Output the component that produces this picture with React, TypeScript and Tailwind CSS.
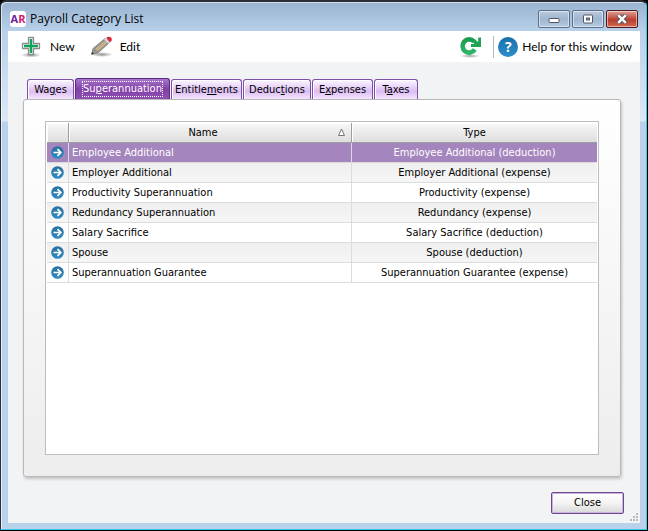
import { useState } from 'react'

type Category = { name: string, type: string }

const TABS = [
  { id: 'wages', before: 'Wa', key: 'g', after: 'es', width: 'w-[47px]' },
  { id: 'super', before: 'Su', key: 'p', after: 'erannuation', width: 'w-[95px]' },
  { id: 'entitlements', before: 'Entitle', key: 'm', after: 'ents', width: 'w-[71px]' },
  { id: 'deductions', before: 'Deduc', key: 't', after: 'ions', width: 'w-[68px]' },
  { id: 'expenses', before: 'E', key: 'x', after: 'penses', width: 'w-[61px]' },
  { id: 'taxes', before: 'T', key: 'a', after: 'xes', width: 'w-11' },
]

const CATEGORIES: Category[] = [
  { name: 'Employee Additional', type: 'Employee Additional (deduction)' },
  { name: 'Employer Additional', type: 'Employer Additional (expense)' },
  { name: 'Productivity Superannuation', type: 'Productivity (expense)' },
  { name: 'Redundancy Superannuation', type: 'Redundancy (expense)' },
  { name: 'Salary Sacrifice', type: 'Salary Sacrifice (deduction)' },
  { name: 'Spouse', type: 'Spouse (deduction)' },
  { name: 'Superannuation Guarantee', type: 'Superannuation Guarantee (expense)' },
]

function AppLogo() {
  return (
    <span className="flex h-4 w-4 items-center justify-center rounded-[3px] bg-white font-['Open_Sans',sans-serif] text-[11px] leading-4 font-bold">
      <span className="text-[#6b1fa0]">A</span>
      <span className="text-[#d6186f]">R</span>
    </span>
  )
}

function NewIcon() {
  return (
    <svg width="22" height="22" viewBox="0 0 22 22" aria-hidden="true">
      <defs>
        <radialGradient id="new-shadow">
          <stop offset="0" stopColor="#777" stopOpacity="0.8" />
          <stop offset="1" stopColor="#777" stopOpacity="0" />
        </radialGradient>
      </defs>
      <ellipse cx="10" cy="19" rx="10" ry="2.500" fill="url(#new-shadow)" />
      <path d="M7.500 1.500h5v6h6v5h-6v6h-5v-6h-6v-5h6z" fill="#fff" stroke="#8c8c8c" strokeWidth="1.300" strokeLinejoin="round" />
      <path d="M10 3v14M3 10h14" stroke="#10a45a" strokeWidth="2.600" />
    </svg>
  )
}

function EditIcon() {
  return (
    <svg width="22" height="22" viewBox="0 0 22 22" aria-hidden="true">
      <defs>
        <radialGradient id="edit-shadow">
          <stop offset="0" stopColor="#777" stopOpacity="0.8" />
          <stop offset="1" stopColor="#777" stopOpacity="0" />
        </radialGradient>
      </defs>
      <ellipse cx="11" cy="18.500" rx="11" ry="2.500" fill="url(#edit-shadow)" />
      <path d="M.5 18.500l1.500-6L14 2.500l4.500 4L7 17z" fill="#98948f" stroke="#827e79" strokeWidth="0.800" />
      <path d="M4.500 13L14.300 4.800l1.900 1.800L6.500 15z" fill="#dcc096" />
      <path d="M5.500 14L15.300 5.700" stroke="#9c876a" strokeWidth="0.700" />
      <path d="M13.800 2.800l4.400 4.200" stroke="#d5d9dc" strokeWidth="2" />
      <path d="M15.200 2Q17.200 0 19.300 1t1.200 4L18.800 6.300z" fill="#d8263c" />
      <path d="M.5 18.500l.7-2.400 1.800 1.500z" fill="#333" />
    </svg>
  )
}

function RefreshIcon() {
  return (
    <svg width="24" height="22" viewBox="0 0 24 22" aria-hidden="true">
      <defs>
        <radialGradient id="refresh-shadow">
          <stop offset="0" stopColor="#777" stopOpacity="0.7" />
          <stop offset="1" stopColor="#777" stopOpacity="0" />
        </radialGradient>
        <linearGradient id="refresh-green" x1="0" y1="0" x2="0" y2="1">
          <stop offset="0" stopColor="#1b9c50" />
          <stop offset="1" stopColor="#2bb565" />
        </linearGradient>
      </defs>
      <ellipse cx="11" cy="20" rx="10" ry="2" fill="url(#refresh-shadow)" />
      <path d="M15.800 13.500A6.600 6.600 0 1 1 15 5.500" fill="none" stroke="url(#refresh-green)" strokeWidth="4.600" />
      <path d="M19.200 1.500H22V11H12V8h3.500L13.500 6l2.500-2.500 3.200 2.500z" fill="#1fa355" />
    </svg>
  )
}

function HelpIcon() {
  return (
    <span className="flex h-5 w-5 items-center justify-center rounded-full bg-linear-to-b from-[#1a6fa8] to-[#2b8fce] font-['Open_Sans',sans-serif] text-sm leading-5 font-bold text-white">
      ?
    </span>
  )
}

function ArrowIcon() {
  return (
    <svg width="13" height="13" viewBox="0 0 13 13" aria-hidden="true">
      <defs>
        <linearGradient id="arrow-blue" x1="0" y1="0" x2="0" y2="1">
          <stop offset="0" stopColor="#2a6f9f" />
          <stop offset="1" stopColor="#2f8cc4" />
        </linearGradient>
      </defs>
      <circle cx="6.500" cy="6.500" r="6.300" fill="url(#arrow-blue)" />
      <path d="M2.500 6.500h7M6.500 3.200l3.300 3.300-3.300 3.300" fill="none" stroke="#fff" strokeWidth="1.700" />
    </svg>
  )
}

function TitleBar() {
  const control = 'flex h-[18px] w-8 items-center justify-center rounded-[2px] border shadow-[inset_0_0_0_1px_rgba(255,255,255,0.5)]'
  return (
    <header className="flex h-[29px] items-center gap-1 pt-[5px] pr-0.5 pl-0.5">
      <AppLogo />
      <h1 className="flex-1 font-['Open_Sans',sans-serif] text-[12px] leading-4 text-black">Payroll Category List</h1>
      <div className="flex gap-0.5">
        <button aria-label="Minimize" className={`${control} border-[#5c6f88] bg-linear-to-b from-[#bccbde] via-[#a0b5cf] via-50% to-[#b4c9e2]`}>
          <svg width="12" height="10" viewBox="0 0 12 10" aria-hidden="true">
            <rect x="1" y="4.500" width="10" height="4" rx="1" fill="#fff" stroke="#53565f" />
          </svg>
        </button>
        <button aria-label="Maximize" className={`${control} border-[#5c6f88] bg-linear-to-b from-[#bccbde] via-[#a0b5cf] via-50% to-[#b4c9e2]`}>
          <svg width="12" height="10" viewBox="0 0 12 10" aria-hidden="true">
            <rect x="1.500" y="1" width="9" height="8" rx="1" fill="#fff" stroke="#53565f" />
            <rect x="4.500" y="4" width="3" height="2" fill="#8ca5c4" stroke="#53565f" />
          </svg>
        </button>
        <button aria-label="Close window" className={`${control} border-[#4f1a1e] bg-linear-to-b from-[#dfa195] via-[#b93c2c] via-55% to-[#d06a50]`}>
          <svg width="14" height="10" viewBox="0 0 14 10" aria-hidden="true">
            <path d="M3 1l8 8M11 1L3 9" stroke="#53565f" strokeWidth="4.500" />
            <path d="M3.200 1.200l7.600 7.600M10.800 1.200L3.200 8.800" stroke="#fff" strokeWidth="2.400" />
          </svg>
        </button>
      </div>
    </header>
  )
}

function Toolbar() {
  return (
    <div className="flex h-[31px] items-center rounded-b-[3px] bg-white pr-2 pl-[13px] font-['Lato',sans-serif] text-[12px] leading-4 text-black">
      <button className="flex items-center gap-[7px]">
        <NewIcon />
        New
      </button>
      <button className="ml-4 flex items-center gap-[7px]">
        <EditIcon />
        Edit
      </button>
      <button aria-label="Refresh" className="mr-2.5 ml-auto">
        <RefreshIcon />
      </button>
      <a href="#help" className="flex h-[22px] items-center gap-1 border-l border-[#b9b9b9] pl-1">
        <HelpIcon />
        Help for this window
      </a>
    </div>
  )
}

function CategoryTable() {
  const [selected, setSelected] = useState(0)
  const head = 'h-5 border-b border-[#9d9d9d] bg-linear-to-b from-[#f8f8f8] to-[#dedede] p-0 font-normal shadow-[inset_1px_1px_0_#fff]'

  return (
    <table className="w-full table-fixed border-separate border-spacing-0 text-[11px] leading-4">
      <colgroup>
        <col className="w-[22px]" />
        <col className="w-[283px]" />
        <col />
      </colgroup>
      <thead>
        <tr>
          <th aria-label="Open" className={`${head} border-r`} />
          <th className={`${head} border-r`}>
            <div className="flex items-center pr-[5px]">
              <span className="flex-1">Name</span>
              <svg width="9" height="9" viewBox="0 0 9 9" aria-hidden="true">
                <path d="M4.500 1L7.500 7.500h-6z" fill="#fff" stroke="#777" />
              </svg>
            </div>
          </th>
          <th className={head}>Type</th>
        </tr>
      </thead>
      <tbody>
        {CATEGORIES.map((category, i) => {
          const rowStyle = i === selected
            ? 'bg-[#a585bd] text-white'
            : i % 2 === 1
              ? 'bg-linear-to-b from-[#efefef] to-[#f6f6f6] text-black'
              : 'bg-white text-black'
          return (
            <tr key={category.name} onClick={() => setSelected(i)} className={rowStyle}>
              <td className="h-5 border-r border-b border-[#dcdcdc] p-0">
                <button aria-label={`Open ${category.name}`} className="flex w-full justify-center">
                  <ArrowIcon />
                </button>
              </td>
              <td className="h-5 border-r border-b border-[#dcdcdc] p-0 pl-[3px]">{category.name}</td>
              <td className="h-5 border-b border-[#dcdcdc] p-0 text-center">{category.type}</td>
            </tr>
          )
        })}
      </tbody>
    </table>
  )
}

export default function App() {
  const [activeTab, setActiveTab] = useState('super')

  return (
    <div className="flex min-h-screen bg-black pr-px pb-px font-['DejaVu_Sans_Condensed','DejaVu_Sans',sans-serif] text-[11px]">
      <div className="flex flex-1 flex-col rounded-t-[6px] border border-t-2 border-[#2b3038] border-r-[#35c8e4] border-b-[#35c8e4] bg-[linear-gradient(to_bottom,#98b3d1,#b9d1ea_30px,#dce8f6_119px,#b9d1ea_120px)] pr-1.5 pb-1.5 pl-[7px] shadow-[inset_1px_1px_0_rgba(255,255,255,0.6)]">
        <TitleBar />
        <main className="flex flex-1 flex-col bg-[#f2f3f5]">
          <Toolbar />

          <div role="tablist" className="mt-4 flex h-[21px] items-end gap-px pl-[19px]">
            {TABS.map(tab => (
              <button
                key={tab.id}
                role="tab"
                aria-selected={tab.id === activeTab}
                onClick={() => setActiveTab(tab.id)}
                className={`flex items-center justify-center rounded-t-[3px] border border-b-0 leading-4 whitespace-nowrap ${tab.width} ${
                  tab.id === activeTab
                    ? 'h-[21px] border-[#5b2a86] bg-linear-to-b from-[#a877cb] via-[#8340a8] via-50% to-[#8e50b2] text-white'
                    : 'h-5 border-[#7c4fa8] bg-linear-to-b from-[#fbf7ff] via-[#dcbcf3] via-60% to-[#f3e6fc] text-black shadow-[inset_1px_1px_0_#fff]'
                }`}
              >
                <span className={tab.id === activeTab ? 'block border border-dotted border-white leading-[14px]' : ''}>
                  {tab.before}<u className="underline-offset-1">{tab.key}</u>{tab.after}
                </span>
              </button>
            ))}
          </div>

          <section className="mr-[19px] ml-[15px] flex flex-1 rounded-[3px] border border-[#b8b8b8] bg-linear-to-b from-white to-[#ededed] px-[21px] pt-[21px] pb-[21px] shadow-[1px_2px_3px_rgba(0,0,0,0.2)]">
            <div className="flex-1 border border-[#bdbdbd] bg-white p-px">
              <CategoryTable />
            </div>
          </section>

          <footer className="relative flex justify-end pt-[15px] pr-4 pb-[9px]">
            <button className="h-[22px] w-[73px] rounded-[2px] border border-[#6b4a8c] bg-linear-to-b from-white via-[#f4f4f4] via-50% to-[#d8d8d8] leading-4 text-black shadow-[inset_0_0_0_1px_#cdb2e0]">
              Close
            </button>
            <svg className="absolute right-0.5 bottom-0.5" width="8" height="8" viewBox="0 0 8 8" aria-hidden="true">
              <path d="M6 0h2v2H6zM3 3h2v2H3zM6 3h2v2H6zM0 6h2v2H0zM3 6h2v2H3zM6 6h2v2H6z" fill="#b9bbbf" />
            </svg>
          </footer>
        </main>
      </div>
    </div>
  )
}
